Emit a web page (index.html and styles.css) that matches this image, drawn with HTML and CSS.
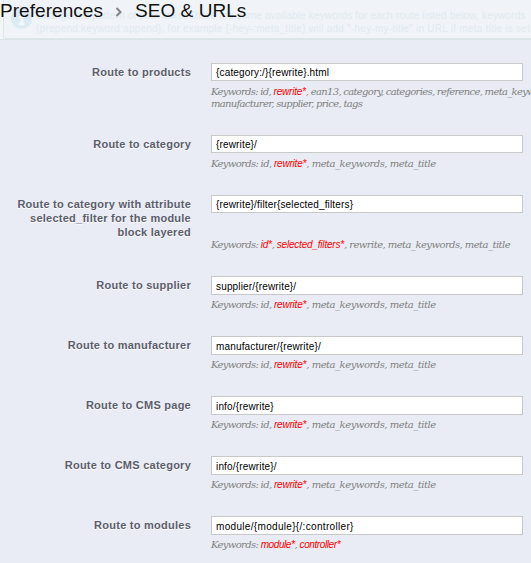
FILE: index.html
```
<!DOCTYPE html>
<html lang="en">
<head>
<meta charset="utf-8">
<title>SEO &amp; URLs</title>
<link rel="stylesheet" href="styles.css">
</head>
<body>
<header class="top">
  <div class="notice">
    <svg class="notice-icon" viewBox="0 0 24 24"><circle cx="12" cy="12" r="11" fill="#dbeaf3"/><path d="M12 5v3M9.500 10.500h3v7M9 17.500h6" stroke="#f3f8fb" stroke-width="3" fill="none"/></svg>
    <p class="notice-text"><span class="line line-one">Change the pattern of your links. There are some available keywords for each route listed below, keywords</span><span class="line">{prepend:keyword:append}, for example {-hey-:meta_title} will add "-hey-my-title" in URL if meta title is set</span></p>
  </div>
  <h1 class="title"><span>Preferences</span><svg class="chevron" viewBox="0 0 8 10"><path d="M1.500 1l4 4-4 4" fill="none" stroke="#808487" stroke-width="2"/></svg><span>SEO &amp; URLs</span></h1>
</header>
<main class="form">
  <div class="row first"><label>Route to products</label><div class="field"><input type="text" value="{category:/}{rewrite}.html"><p class="hint">Keywords: id, <em>rewrite*</em>, ean13, category, categories, reference, meta_keywords,<br>manufacturer, supplier, price, tags</p></div></div>
  <div class="row"><label>Route to category</label><div class="field"><input type="text" value="{rewrite}/"><p class="hint">Keywords: id, <em>rewrite*</em><span class="tail">, meta_keywords, meta_title</span></p></div></div>
  <div class="row layered"><label>Route to category with attribute<br>selected_filter for the module<br>block layered</label><div class="field"><input type="text" value="{rewrite}/filter{selected_filters}"><p class="hint">Keywords: <em>id*</em>, <em>selected_filters*</em><span class="tail">, rewrite, meta_keywords, meta_title</span></p></div></div>
  <div class="row tall"><label>Route to supplier</label><div class="field"><input type="text" value="supplier/{rewrite}/"><p class="hint">Keywords: id, <em>rewrite*</em><span class="tail">, meta_keywords, meta_title</span></p></div></div>
  <div class="row tall"><label>Route to manufacturer</label><div class="field"><input type="text" value="manufacturer/{rewrite}/"><p class="hint">Keywords: id, <em>rewrite*</em><span class="tail">, meta_keywords, meta_title</span></p></div></div>
  <div class="row tall"><label>Route to CMS page</label><div class="field"><input type="text" value="info/{rewrite}"><p class="hint">Keywords: id, <em>rewrite*</em><span class="tail">, meta_keywords, meta_title</span></p></div></div>
  <div class="row tall"><label>Route to CMS category</label><div class="field"><input type="text" value="info/{rewrite}/"><p class="hint">Keywords: id, <em>rewrite*</em><span class="tail">, meta_keywords, meta_title</span></p></div></div>
  <div class="row tall modules"><label>Route to modules</label><div class="field"><input type="text" value="module/{module}{/:controller}"><p class="hint">Keywords: <em>module*</em>, <em>controller*</em></p></div></div>
</main>
</body>
</html>
```
FILE: styles.css
```
* { box-sizing: border-box; }
body {
  margin: 0;
  height: 563px;
  overflow: hidden;
  background: #e9ecf4;
  font-family: "Liberation Sans", Arial, sans-serif;
}
.top {
  position: relative;
  height: 40px;
  overflow: hidden;
  background: #f3f6f9;
  border-bottom: 1px solid #dce3e8;
}
.notice {
  display: flex;
  height: 39px;
  margin-left: 3px;
  padding: 9px 0 0 6px;
  background: #f0f4f8;
  border-left: 1px solid #dce7ec;
  border-bottom: 1px solid #dce7ec;
  border-bottom-left-radius: 3px;
}
.notice-icon { flex: none; width: 23px; height: 23px; margin-top: -2px; }
.notice-text {
  margin: 0 0 0 3px;
  color: #dfe9f0;
  font-size: 10px;
  line-height: 13px;
  letter-spacing: 0.25px;
  white-space: nowrap;
}
.line { display: block; }
.line-one { letter-spacing: 0.17px; }
.title {
  position: absolute;
  left: 0;
  top: 0;
  display: flex;
  align-items: center;
  margin: 0;
  color: #111;
  font-size: 19px;
  font-weight: 400;
  line-height: 21px;
  letter-spacing: 0.05px;
  white-space: nowrap;
}
.chevron { width: 8px; height: 10px; margin: 3px 12px 0 12px; }
.form { padding-top: 23px; }
.row {
  display: grid;
  grid-template-columns: 191px 312px;
  column-gap: 20px;
  height: 60px;
}
.row.first { height: 72px; }
.row.layered { height: 81px; }
label {
  padding-top: 2px;
  color: #5b5d6b;
  font-size: 11px;
  font-weight: 700;
  line-height: 14px;
  letter-spacing: 0.25px;
  text-align: right;
  text-shadow: 0 1px 0 #fff;
  white-space: nowrap;
}
input {
  display: block;
  width: 312px;
  height: 18px;
  margin: 0;
  padding: 1px 4px 0;
  border: 1px solid #c8c8c8;
  background: #fff;
  color: #000;
  font: 10px/15px "Liberation Sans", Arial, sans-serif;
  letter-spacing: 0.16px;
}
.tall input { height: 19px; }
.modules input { letter-spacing: 0.32px; }
.hint {
  margin: 5px 0 0;
  color: #7f7f7f;
  font: italic 10px/12px "DejaVu Serif", Georgia, serif;
  letter-spacing: -0.66px;
  white-space: nowrap;
}
.first .hint { letter-spacing: -0.69px; }
.tall .hint { margin-top: 4px; }
.layered .hint { margin-top: 26px; }
.hint em {
  color: #f00;
  font-family: "Liberation Sans", Arial, sans-serif;
  letter-spacing: -0.2px;
}
.hint .tail { letter-spacing: -0.48px; }
.layered .hint .tail { letter-spacing: -0.55px; }
.modules .hint em { letter-spacing: -0.4px; }
```
